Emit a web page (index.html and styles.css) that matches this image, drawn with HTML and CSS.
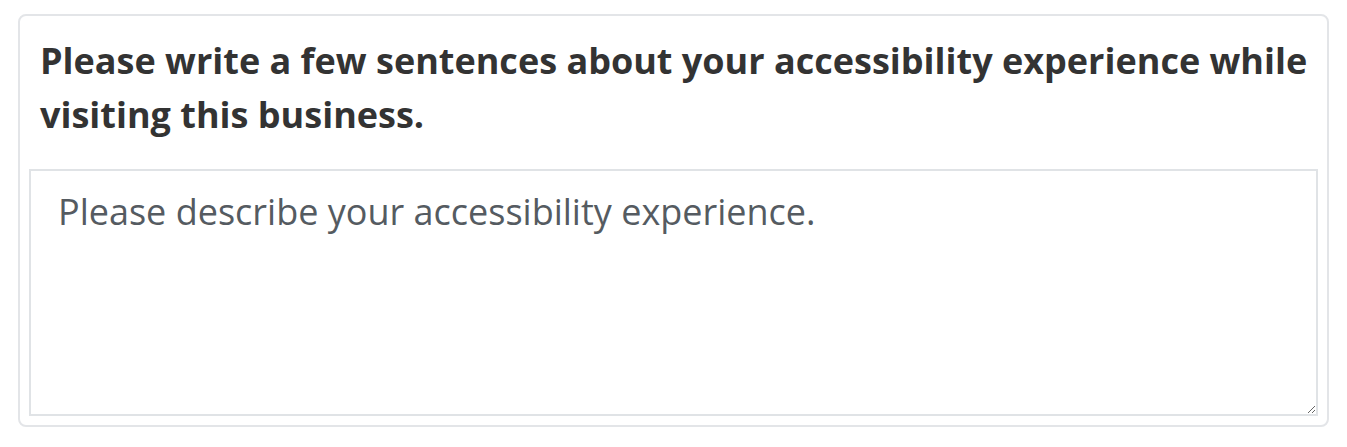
FILE: index.html
```html
<!DOCTYPE html>
<html lang="en">
<head>
<meta charset="utf-8">
<title>Accessibility experience</title>
<link rel="stylesheet" href="styles.css">
</head>
<body>
<div class="page">
  <div class="card">
    <label class="question" for="exp">Please write a few sentences about your accessibility experience while visiting this business.</label>
    <textarea id="exp" class="answer" placeholder="Please describe your accessibility experience."></textarea>
  </div>
</div>
</body>
</html>
```
FILE: styles.css
```css
html, body {
  margin: 0;
  padding: 0;
  background: #ffffff;
}
.page {
  padding: 14px 18px;
  font-family: "Open Sans", "Liberation Sans", sans-serif;
}
.card {
  border: 2px solid #e3e5e8;
  border-radius: 8px;
  padding: 18px 9px 9px 9px;
  display: flex;
  flex-direction: column;
  gap: 27px;
}
.question {
  display: block;
  margin: 0 0 0 11px;
  font-size: 36px;
  line-height: 54px;
  font-weight: 700;
  color: #333333;
}
.answer {
  display: block;
  box-sizing: border-box;
  width: 100%;
  height: 247px;
  margin: 0;
  border: 2px solid #e0e3e6;
  border-radius: 0;
  padding: 17px 27px 15px 27px;
  font-family: "Open Sans", "Liberation Sans", sans-serif;
  font-size: 36px;
  line-height: 48px;
  color: #333333;
  background: #ffffff;
}
.answer::placeholder {
  color: #555b61;
  opacity: 1;
}
```
